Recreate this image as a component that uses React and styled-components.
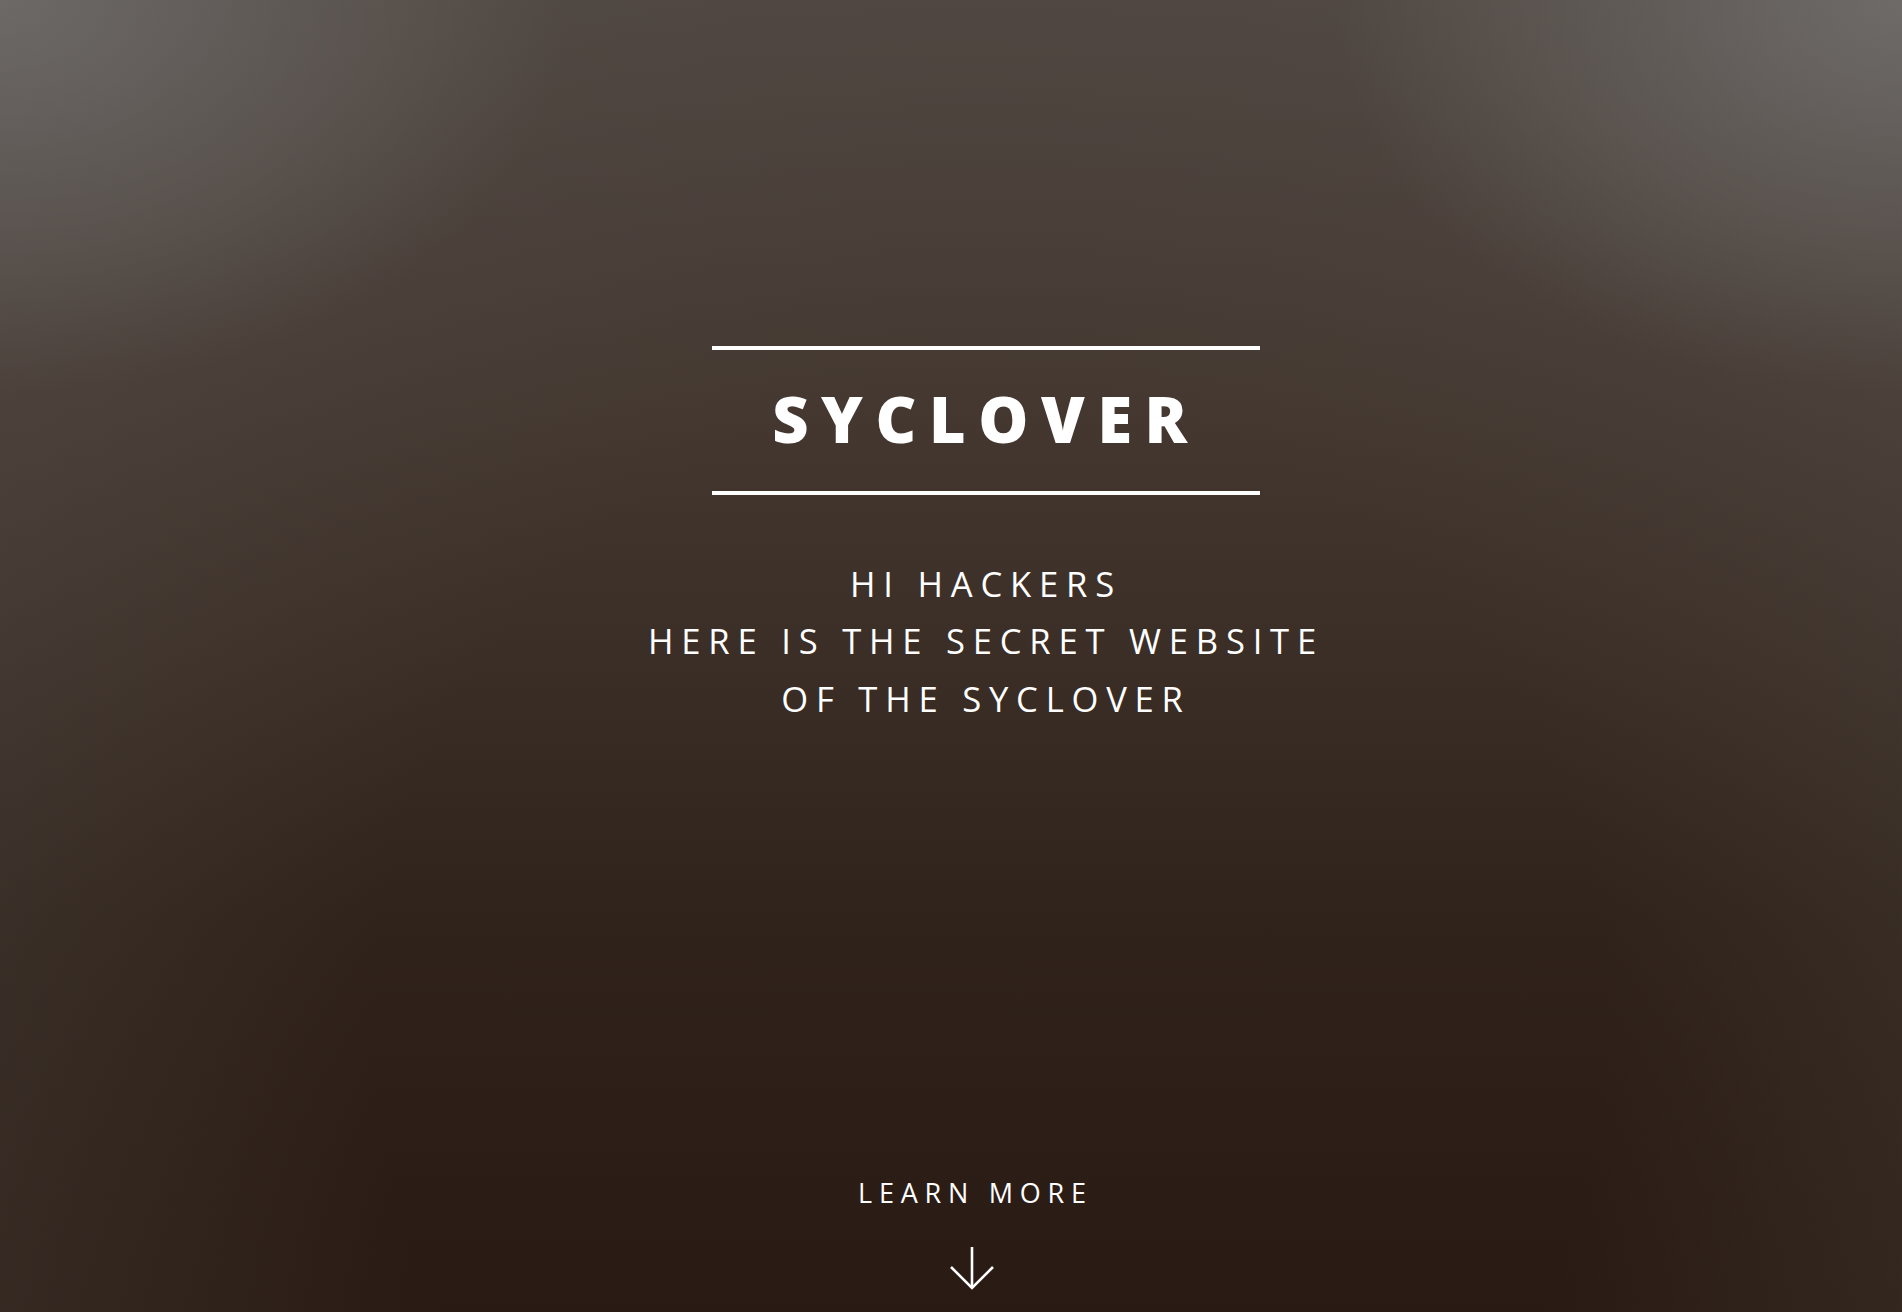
import styled, { createGlobalStyle } from 'styled-components'

const GlobalStyle = createGlobalStyle`
	html, body {
		margin: 0;
		padding: 0;
	}
	body {
		font-family: 'Open Sans', 'Liberation Sans', sans-serif;
		color: #fff;
		background: #2a1d16;
	}
`

const Banner = styled.section`
	box-sizing: border-box;
	min-height: 100vh;
	display: flex;
	flex-direction: column;
	align-items: center;
	padding: 346px 0 22px 70px;
	background:
		radial-gradient(ellipse 30% 30% at 0% 0%, rgba(112, 110, 108, 0.85) 0%, rgba(112, 110, 108, 0) 100%),
		radial-gradient(ellipse 30% 30% at 100% 0%, rgba(114, 112, 110, 0.85) 0%, rgba(114, 112, 110, 0) 100%),
		radial-gradient(ellipse 72% 105% at 52% 78%, rgba(40, 26, 18, 0) 45%, rgba(92, 84, 80, 0.45) 100%),
		linear-gradient(to bottom, #4c433d 0%, #443831 30%, #3b2e27 50%, #30231c 70%, #291b14 100%);
`

const Title = styled.h2`
	margin: 0;
	padding: 37px 60px 41px;
	border-top: 4px solid #fff;
	border-bottom: 4px solid #fff;
	font-size: 63px;
	font-weight: 800;
	line-height: 1;
	letter-spacing: 0.2em;
	text-transform: uppercase;
`

const Intro = styled.p`
	margin: 60px 0 0;
	font-size: 34.6px;
	font-weight: 400;
	line-height: 1.655;
	letter-spacing: 0.225em;
	text-transform: uppercase;
	text-align: center;
`

const More = styled.a`
	margin-top: auto;
	margin-left: -28px;
	display: flex;
	flex-direction: column;
	align-items: center;
	gap: 35px;
	color: #fff;
	text-decoration: none;
	font-size: 27px;
	line-height: 1.5;
	letter-spacing: 0.25em;
	text-transform: uppercase;
`

const MoreLabel = styled.span`
	margin-right: -0.25em;
	transform: translateY(1px);
`

const Arrow = () => (
	<svg width='44' height='43' viewBox='0 0 44 43' fill='none' stroke='#fff' strokeWidth='2.6'>
		<path d='M22 0 V41' />
		<path d='M1 20 L22 41 L43 20' />
	</svg>
)

const App = () => {
	return (
		<>
			<GlobalStyle />
			<Banner>
				<Title>Syclover</Title>
				<Intro>
					Hi hackers
					<br />
					here is the secret website
					<br />
					of the syclover
				</Intro>
				<More href='#one'>
					<MoreLabel>Learn more</MoreLabel>
					<Arrow />
				</More>
			</Banner>
		</>
	)
}

export default App
